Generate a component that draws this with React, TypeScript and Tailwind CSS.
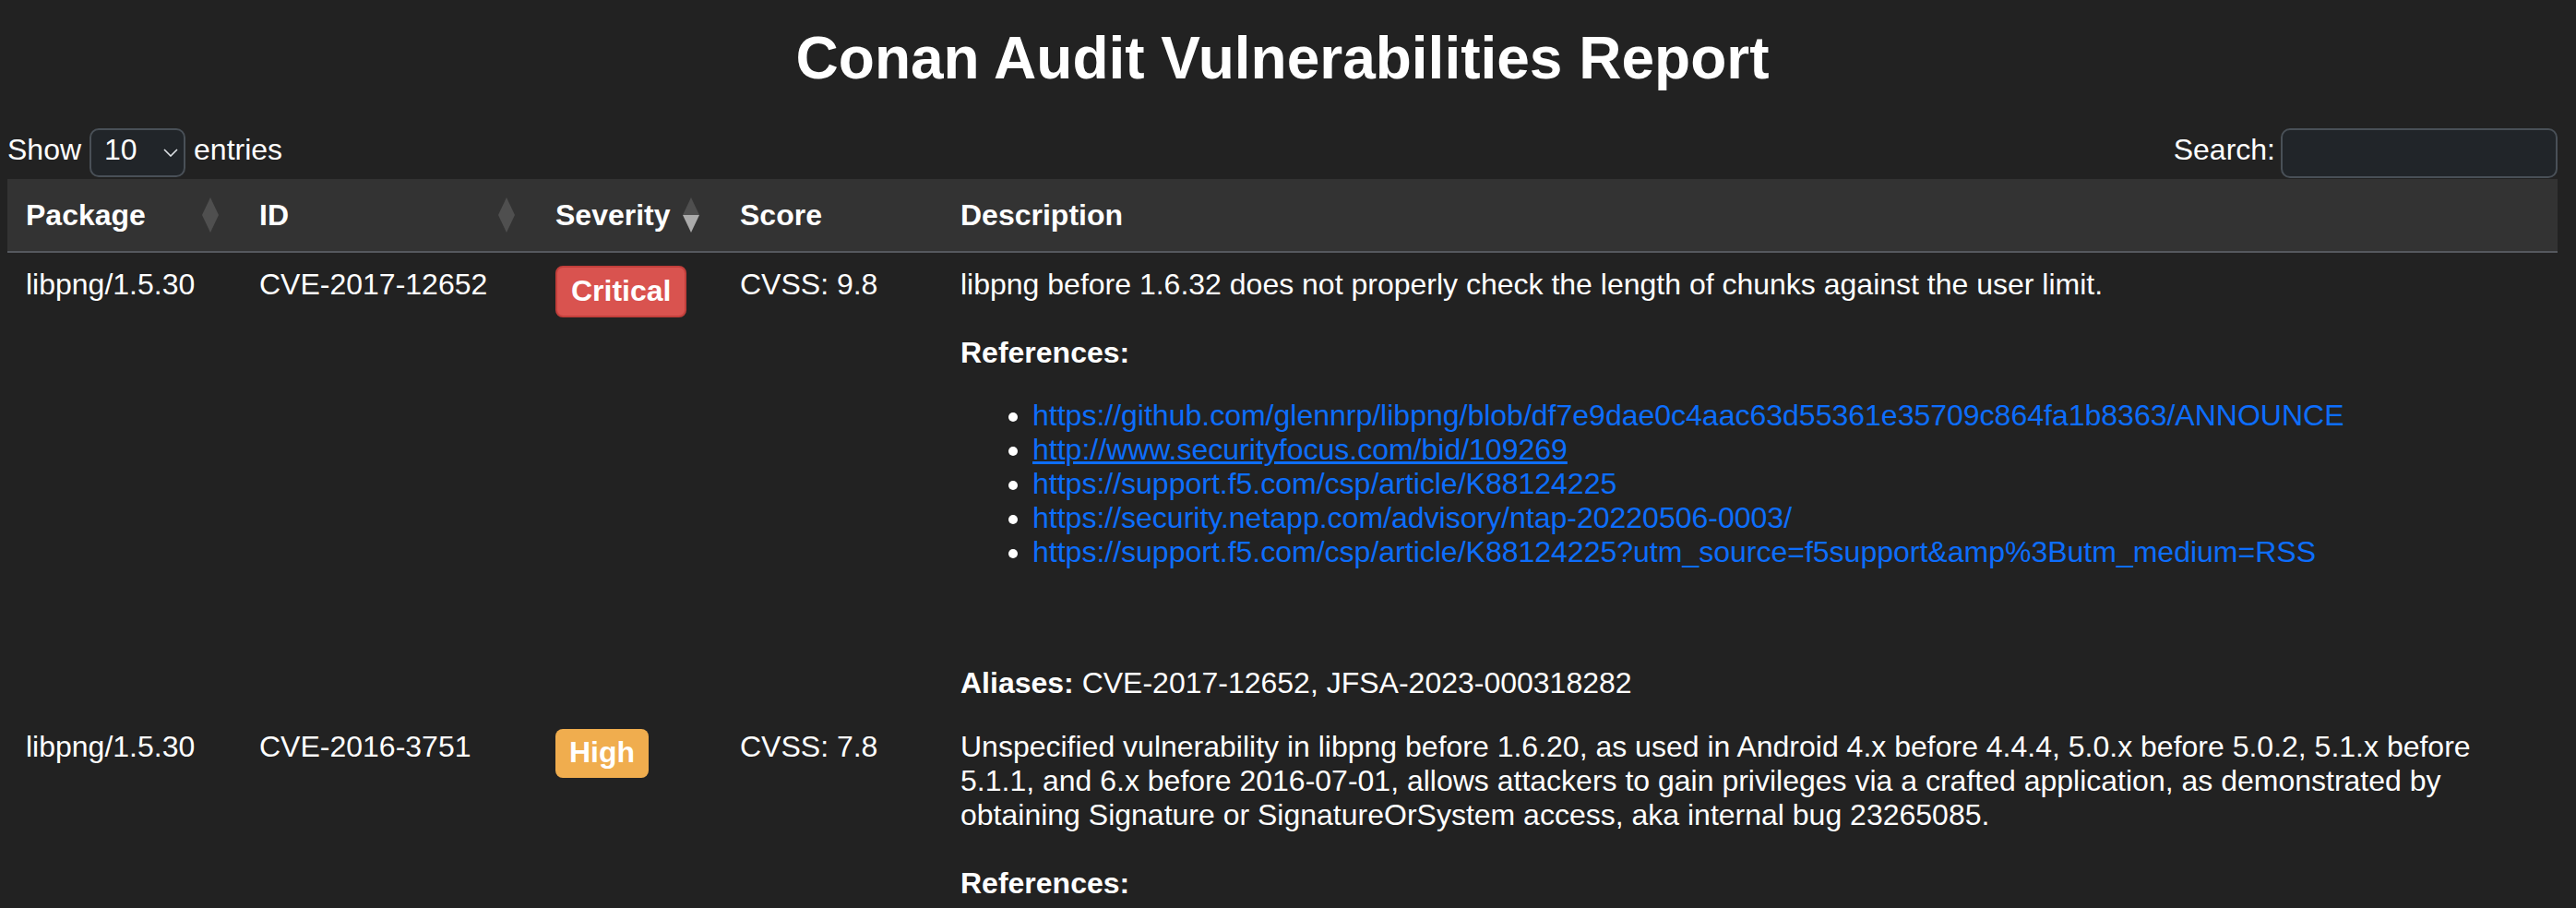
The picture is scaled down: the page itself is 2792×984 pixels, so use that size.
import React from "react";

function SortIcon({ active }: { active?: "asc" | "desc" }) {
  const dim = "#4f4f4f";
  const lit = "#ababab";
  return (
    <svg width="18" height="38" viewBox="0 0 18 38" className="shrink-0">
      <polygon points="9,0 18,19 0,19" fill={active === "asc" ? lit : dim} />
      <polygon points="0,19 18,19 9,38" fill={active === "desc" ? lit : dim} />
    </svg>
  );
}

function Th({
  label,
  width,
  sort,
}: {
  label: string;
  width?: string;
  sort?: "none" | "asc" | "desc" | "off";
}) {
  return (
    <th
      className={`${width ?? ""} bg-[#333333] border-b-2 border-[#55585e] pl-[20px] pr-[24px] pt-[20px] pb-[20px] text-left align-middle font-bold text-[32px] leading-[37px] text-white`}
    >
      <div className="flex items-center justify-between">
        <span>{label}</span>
        {sort && sort !== "off" ? (
          <SortIcon active={sort === "none" ? undefined : sort} />
        ) : null}
      </div>
    </th>
  );
}

const links = [
  {
    href: "https://github.com/glennrp/libpng/blob/df7e9dae0c4aac63d55361e35709c864fa1b8363/ANNOUNCE",
    underline: false,
  },
  { href: "http://www.securityfocus.com/bid/109269", underline: true },
  { href: "https://support.f5.com/csp/article/K88124225", underline: false },
  { href: "https://security.netapp.com/advisory/ntap-20220506-0003/", underline: false },
  {
    href: "https://support.f5.com/csp/article/K88124225?utm_source=f5support&amp%3Butm_medium=RSS",
    underline: false,
  },
];

const td = "align-top pt-[16px] pb-[16px] pl-[20px] pr-[18px] text-[32px] leading-[37px] text-white";

export default function App() {
  return (
    <div className="min-h-screen bg-[#222222] pl-[8px] pr-[20px] text-white font-['Liberation_Sans',Arial,sans-serif] overflow-hidden">
      <h1 className="pt-[26px] text-center text-[64px] font-bold leading-[74px]">
        Conan Audit Vulnerabilities Report
      </h1>

      <div className="mt-[39px] flex h-[55px] items-start justify-between">
        <div className="flex items-start">
          <span className="mt-[5px] text-[32px] leading-[37px]">Show</span>
          <div className="mx-[9px] flex h-[53px] w-[104px] rounded-[10px] border-2 border-[#495057] bg-[#212529] pl-[14px] pr-[6px]">
            <span className="mt-[3px] text-[32px] leading-[37px]">10</span>
            <svg width="16" height="9" viewBox="0 0 16 9" className="ml-auto self-center">
              <polyline points="1,1 8,8 15,1" fill="none" stroke="#dee2e6" strokeWidth="1.6" />
            </svg>
          </div>
          <span className="mt-[5px] text-[32px] leading-[37px]">entries</span>
        </div>
        <div className="flex items-start">
          <span className="mt-[5px] text-[32px] leading-[37px]">Search:</span>
          <input
            type="text"
            aria-label="Search"
            className="ml-[6px] h-[54px] w-[300px] rounded-[10px] border-2 border-[#495057] bg-[#212529] px-[12px] text-[32px] text-white outline-none"
          />
        </div>
      </div>

      <table className="w-full table-fixed border-collapse">
        <thead>
          <tr>
            <Th label="Package" width="w-[253px]" sort="none" />
            <Th label="ID" width="w-[321px]" sort="none" />
            <Th label="Severity" width="w-[200px]" sort="desc" />
            <Th label="Score" width="w-[239px]" sort="off" />
            <Th label="Description" sort="off" />
          </tr>
        </thead>
        <tbody>
          <tr>
            <td className={td}>libpng/1.5.30</td>
            <td className={td}>CVE-2017-12652</td>
            <td className={td}>
              <span className="-mt-[2px] inline-block rounded-[8px] border-2 border-[#c23f3b] bg-[#d9534f] px-[15px] pt-[7px] pb-[8px] font-bold text-white">
                Critical
              </span>
            </td>
            <td className={td}>CVSS: 9.8</td>
            <td className={td}>
              <p>libpng before 1.6.32 does not properly check the length of chunks against the user limit.</p>
              <p className="mt-[37px] font-bold">References:</p>
              <ul className="mt-[31px] list-disc pl-[78px]">
                {links.map((l) => (
                  <li key={l.href}>
                    <a
                      href={l.href}
                      className={`text-[#0d6efd] ${l.underline ? "underline" : "no-underline"}`}
                    >
                      {l.href}
                    </a>
                  </li>
                ))}
              </ul>
              <p className="mt-[105px]">
                <strong>Aliases:</strong> CVE-2017-12652, JFSA-2023-000318282
              </p>
            </td>
          </tr>
          <tr>
            <td className={td}>libpng/1.5.30</td>
            <td className={td}>CVE-2016-3751</td>
            <td className={td}>
              <span className="-mt-[1px] inline-block rounded-[8px] bg-[#f0ad4e] px-[15px] pt-[7px] pb-[9px] font-bold text-white">
                High
              </span>
            </td>
            <td className={td}>CVSS: 7.8</td>
            <td className={td}>
              <p>
                Unspecified vulnerability in libpng before 1.6.20, as used in Android 4.x before 4.4.4, 5.0.x before 5.0.2, 5.1.x before 5.1.1, and 6.x before 2016-07-01, allows attackers to gain privileges via a crafted application, as demonstrated by obtaining Signature or SignatureOrSystem access, aka internal bug 23265085.
              </p>
              <p className="mt-[37px] font-bold">References:</p>
              <ul className="mt-[31px] list-disc pl-[78px]">
                <li>
                  <a href="https://source.android.com/security/bulletin/2016-07-01.html" className="text-[#0d6efd]">
                    https://source.android.com/security/bulletin/2016-07-01.html
                  </a>
                </li>
              </ul>
            </td>
          </tr>
        </tbody>
      </table>
    </div>
  );
}
